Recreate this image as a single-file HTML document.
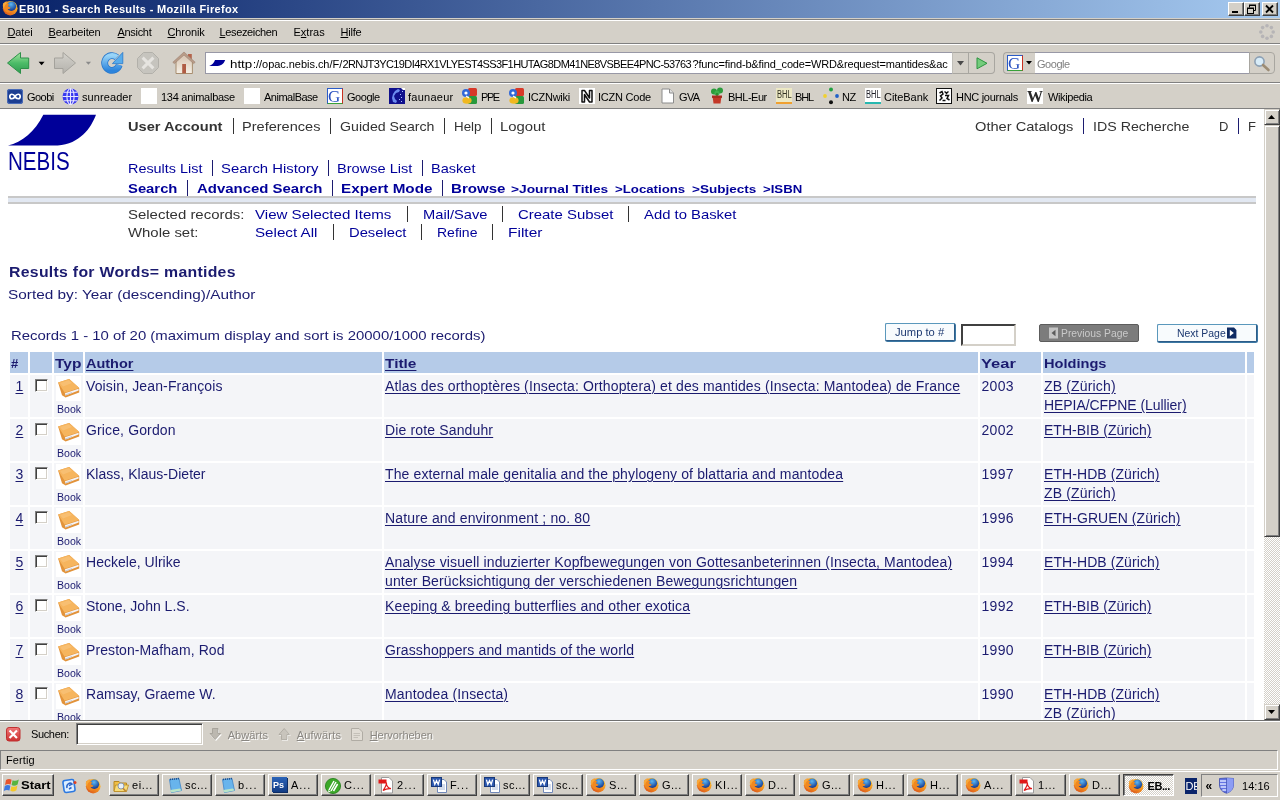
<!DOCTYPE html>
<html><head><meta charset="utf-8"><title>EBI01 - Search Results - Mozilla Firefox</title>
<style>
html,body{margin:0;padding:0;width:1280px;height:800px;overflow:hidden;background:#d4d0c8;font-family:"Liberation Sans",sans-serif;}
.t{position:absolute;white-space:pre;line-height:normal;}
.a{position:absolute;}
svg{position:absolute;overflow:visible;}
#root{position:absolute;left:0;top:0;width:1280px;height:800px;overflow:hidden;will-change:transform;}
</style></head><body><div id="root">
<div style="position:absolute;left:0px;top:0px;width:1280px;height:18px;background:linear-gradient(to right,#0a246a 0%,#0a246a 2%,#a6caf0 100%);"></div>
<div style="position:absolute;left:0px;top:18px;width:1280px;height:1px;background:#d4d0c8;"></div>
<div style="position:absolute;left:0px;top:19px;width:1280px;height:1px;background:#808080;"></div>
<div style="position:absolute;left:0px;top:20px;width:1280px;height:1px;background:#fff;"></div>
<span class="t" style="left:19.0px;top:3px;font-size:11px;color:#fff;font-weight:bold;letter-spacing:0.338px;">EBI01 - Search Results - Mozilla Firefox</span>
<div style="position:absolute;left:0px;top:21px;width:1280px;height:22px;background:#d4d0c8;"></div>
<span class="t" style="left:7.5px;top:26px;font-size:11px;color:#000;letter-spacing:-0.119px;"><u>D</u>atei</span>
<span class="t" style="left:48.5px;top:26px;font-size:11px;color:#000;letter-spacing:-0.112px;"><u>B</u>earbeiten</span>
<span class="t" style="left:117.5px;top:26px;font-size:11px;color:#000;letter-spacing:-0.311px;"><u>A</u>nsicht</span>
<span class="t" style="left:167.5px;top:26px;font-size:11px;color:#000;letter-spacing:-0.116px;"><u>C</u>hronik</span>
<span class="t" style="left:219.5px;top:26px;font-size:11px;color:#000;letter-spacing:-0.357px;"><u>L</u>esezeichen</span>
<span class="t" style="left:293.5px;top:26px;font-size:11px;color:#000;">E<u>x</u>tras</span>
<span class="t" style="left:340.5px;top:26px;font-size:11px;color:#000;letter-spacing:-0.201px;"><u>H</u>ilfe</span>
<div style="position:absolute;left:0px;top:43px;width:1280px;height:1px;background:#808080;"></div>
<div style="position:absolute;left:0px;top:44px;width:1280px;height:1px;background:#fff;"></div>
<div style="position:absolute;left:0px;top:82px;width:1280px;height:1px;background:#808080;"></div>
<div style="position:absolute;left:0px;top:83px;width:1280px;height:1px;background:#fff;"></div>
<div style="position:absolute;left:205px;top:52px;width:748px;height:22px;background:#fff;border:1px solid #9898a6;box-sizing:border-box;"></div>
<span class="t" style="left:230.0px;top:58px;font-size:11px;color:#000;transform:scaleX(1.2097);transform-origin:0 0;">http</span>
<span class="t" style="left:253.0px;top:58px;font-size:11px;color:#000;letter-spacing:-0.038px;">://opac.nebis.ch/F/</span>
<span class="t" style="left:342.5px;top:58px;font-size:11px;color:#000;letter-spacing:-0.602px;">2RNJT3YC19DI4RX1VLYEST4SS3F1HUTAG8DM41NE8VSBEE4PNC-53763</span>
<span class="t" style="left:692.5px;top:58px;font-size:11px;color:#000;letter-spacing:-0.165px;">?func=find-b&amp;find_code=WRD&amp;request=mantides&amp;ac</span>
<div style="position:absolute;left:1034px;top:52px;width:216px;height:22px;background:#fff;border-top:1px solid #9898a6;border-bottom:1px solid #9898a6;box-sizing:border-box;"></div>
<span class="t" style="left:1037.0px;top:58px;font-size:11px;color:#808080;letter-spacing:-0.455px;">Google</span>
<span class="t" style="left:27.0px;top:91px;font-size:11px;color:#000;letter-spacing:-0.537px;">Goobi</span>
<span class="t" style="left:82.0px;top:91px;font-size:11px;color:#000;letter-spacing:0.083px;">sunreader</span>
<span class="t" style="left:161.0px;top:91px;font-size:11px;color:#000;letter-spacing:-0.266px;">134 animalbase</span>
<span class="t" style="left:264.0px;top:91px;font-size:11px;color:#000;letter-spacing:-0.499px;">AnimalBase</span>
<span class="t" style="left:347.0px;top:91px;font-size:11px;color:#000;letter-spacing:-0.455px;">Google</span>
<span class="t" style="left:408.0px;top:91px;font-size:11px;color:#000;letter-spacing:0.253px;">faunaeur</span>
<span class="t" style="left:481.0px;top:91px;font-size:11px;color:#000;letter-spacing:-1.403px;">PPE</span>
<span class="t" style="left:528.0px;top:91px;font-size:11px;color:#000;letter-spacing:-0.256px;">ICZNwiki</span>
<span class="t" style="left:598.0px;top:91px;font-size:11px;color:#000;letter-spacing:-0.228px;">ICZN Code</span>
<span class="t" style="left:679.0px;top:91px;font-size:11px;color:#000;letter-spacing:-0.606px;">GVA</span>
<span class="t" style="left:728.0px;top:91px;font-size:11px;color:#000;letter-spacing:-0.496px;">BHL-Eur</span>
<span class="t" style="left:795.0px;top:91px;font-size:11px;color:#000;letter-spacing:-1.098px;">BHL</span>
<span class="t" style="left:842.0px;top:91px;font-size:11px;color:#000;letter-spacing:-0.462px;">NZ</span>
<span class="t" style="left:884.0px;top:91px;font-size:11px;color:#000;letter-spacing:-0.062px;">CiteBank</span>
<span class="t" style="left:956.0px;top:91px;font-size:11px;color:#000;letter-spacing:-0.292px;">HNC journals</span>
<span class="t" style="left:1048.0px;top:91px;font-size:11px;color:#000;letter-spacing:-0.372px;">Wikipedia</span>
<div style="position:absolute;left:0px;top:108px;width:1280px;height:1px;background:#808080;"></div>
<div style="position:absolute;left:0px;top:109px;width:1264px;height:611px;background:#fff;"></div>
<svg style="left:0;top:108px" width="110" height="70"><path d="M43.3 6.8 L96 6.8 C91 20 80 36 57.7 37.6 L8 37.6 C22 34 35 24 43.3 6.8 Z" fill="#000099"/></svg>
<span class="t" style="left:8.0px;top:147px;font-size:25px;color:#000099;transform:scaleX(0.8230);transform-origin:0 0;">NEBIS</span>
<span class="t" style="left:128.0px;top:119px;font-size:13px;color:#333333;font-weight:bold;transform:scaleX(1.1235);transform-origin:0 0;">User Account</span>
<div style="position:absolute;left:233px;top:118px;width:1px;height:16px;background:#333;"></div>
<span class="t" style="left:242.0px;top:119px;font-size:13px;color:#333333;transform:scaleX(1.1189);transform-origin:0 0;">Preferences</span>
<div style="position:absolute;left:330px;top:118px;width:1px;height:16px;background:#333;"></div>
<span class="t" style="left:340.0px;top:119px;font-size:13px;color:#333333;transform:scaleX(1.0887);transform-origin:0 0;">Guided Search</span>
<div style="position:absolute;left:444px;top:118px;width:1px;height:16px;background:#333;"></div>
<span class="t" style="left:454.0px;top:119px;font-size:13px;color:#333333;transform:scaleX(1.0254);transform-origin:0 0;">Help</span>
<div style="position:absolute;left:491px;top:118px;width:1px;height:16px;background:#333;"></div>
<span class="t" style="left:500.0px;top:119px;font-size:13px;color:#333333;transform:scaleX(1.1424);transform-origin:0 0;">Logout</span>
<span class="t" style="left:975.0px;top:119px;font-size:13px;color:#333333;transform:scaleX(1.1257);transform-origin:0 0;">Other Catalogs</span>
<div style="position:absolute;left:1083px;top:118px;width:1px;height:16px;background:#1c1c70;"></div>
<span class="t" style="left:1093.0px;top:119px;font-size:13px;color:#333333;transform:scaleX(1.0939);transform-origin:0 0;">IDS Recherche</span>
<span class="t" style="left:1219.0px;top:119px;font-size:13px;color:#333333;">D</span>
<div style="position:absolute;left:1238px;top:118px;width:1px;height:16px;background:#1c1c70;"></div>
<span class="t" style="left:1248.0px;top:119px;font-size:13px;color:#333333;">F</span>
<span class="t" style="left:128.0px;top:161px;font-size:13px;color:#000099;transform:scaleX(1.1075);transform-origin:0 0;">Results List</span>
<div style="position:absolute;left:212px;top:160px;width:1px;height:16px;background:#1c1c70;"></div>
<span class="t" style="left:221.0px;top:161px;font-size:13px;color:#000099;transform:scaleX(1.1429);transform-origin:0 0;">Search History</span>
<div style="position:absolute;left:328px;top:160px;width:1px;height:16px;background:#1c1c70;"></div>
<span class="t" style="left:337.0px;top:161px;font-size:13px;color:#000099;transform:scaleX(1.1224);transform-origin:0 0;">Browse List</span>
<div style="position:absolute;left:422px;top:160px;width:1px;height:16px;background:#1c1c70;"></div>
<span class="t" style="left:431.0px;top:161px;font-size:13px;color:#000099;transform:scaleX(1.1177);transform-origin:0 0;">Basket</span>
<span class="t" style="left:128.0px;top:181px;font-size:13px;color:#000099;font-weight:bold;transform:scaleX(1.1396);transform-origin:0 0;">Search</span>
<div style="position:absolute;left:187px;top:180px;width:1px;height:16px;background:#1c1c70;"></div>
<span class="t" style="left:197.0px;top:181px;font-size:13px;color:#000099;font-weight:bold;transform:scaleX(1.1496);transform-origin:0 0;">Advanced Search</span>
<div style="position:absolute;left:332px;top:180px;width:1px;height:16px;background:#1c1c70;"></div>
<span class="t" style="left:341.0px;top:181px;font-size:13px;color:#000099;font-weight:bold;transform:scaleX(1.1719);transform-origin:0 0;">Expert Mode</span>
<div style="position:absolute;left:442px;top:180px;width:1px;height:16px;background:#1c1c70;"></div>
<span class="t" style="left:451.0px;top:181px;font-size:13px;color:#000099;font-weight:bold;transform:scaleX(1.1589);transform-origin:0 0;">Browse</span>
<span class="t" style="left:511.0px;top:183px;font-size:11px;color:#000099;font-weight:bold;transform:scaleX(1.2503);transform-origin:0 0;">&gt;Journal Titles</span>
<span class="t" style="left:615.0px;top:183px;font-size:11px;color:#000099;font-weight:bold;transform:scaleX(1.2027);transform-origin:0 0;">&gt;Locations</span>
<span class="t" style="left:692.0px;top:183px;font-size:11px;color:#000099;font-weight:bold;transform:scaleX(1.2282);transform-origin:0 0;">&gt;Subjects</span>
<span class="t" style="left:763.0px;top:183px;font-size:11px;color:#000099;font-weight:bold;transform:scaleX(1.1984);transform-origin:0 0;">&gt;ISBN</span>
<div style="position:absolute;left:8px;top:196px;width:1248px;height:8px;background:#e2e8f2;border-top:2px solid #c8c8c8;border-bottom:2px solid #c8c8c8;box-sizing:border-box;"></div>
<span class="t" style="left:128.0px;top:207px;font-size:13px;color:#333333;transform:scaleX(1.1508);transform-origin:0 0;">Selected records:</span>
<span class="t" style="left:255.0px;top:207px;font-size:13px;color:#000099;transform:scaleX(1.1606);transform-origin:0 0;">View Selected Items</span>
<div style="position:absolute;left:407px;top:206px;width:1px;height:16px;background:#333;"></div>
<span class="t" style="left:423.0px;top:207px;font-size:13px;color:#000099;transform:scaleX(1.1288);transform-origin:0 0;">Mail/Save</span>
<div style="position:absolute;left:502px;top:206px;width:1px;height:16px;background:#333;"></div>
<span class="t" style="left:518.0px;top:207px;font-size:13px;color:#000099;transform:scaleX(1.1482);transform-origin:0 0;">Create Subset</span>
<div style="position:absolute;left:628px;top:206px;width:1px;height:16px;background:#333;"></div>
<span class="t" style="left:644.0px;top:207px;font-size:13px;color:#000099;transform:scaleX(1.1418);transform-origin:0 0;">Add to Basket</span>
<span class="t" style="left:128.0px;top:225px;font-size:13px;color:#333333;transform:scaleX(1.1467);transform-origin:0 0;">Whole set:</span>
<span class="t" style="left:255.0px;top:225px;font-size:13px;color:#000099;transform:scaleX(1.1673);transform-origin:0 0;">Select All</span>
<div style="position:absolute;left:333px;top:224px;width:1px;height:16px;background:#333;"></div>
<span class="t" style="left:349.0px;top:225px;font-size:13px;color:#000099;transform:scaleX(1.1355);transform-origin:0 0;">Deselect</span>
<div style="position:absolute;left:421px;top:224px;width:1px;height:16px;background:#333;"></div>
<span class="t" style="left:437.0px;top:225px;font-size:13px;color:#000099;transform:scaleX(1.0759);transform-origin:0 0;">Refine</span>
<div style="position:absolute;left:492px;top:224px;width:1px;height:16px;background:#333;"></div>
<span class="t" style="left:507.5px;top:225px;font-size:13px;color:#000099;transform:scaleX(1.1917);transform-origin:0 0;">Filter</span>
<span class="t" style="left:8.5px;top:263px;font-size:15px;color:#1b1b6f;font-weight:bold;letter-spacing:0.275px;transform:scaleX(1.0543);transform-origin:0 0;">Results for Words= mantides</span>
<span class="t" style="left:8.0px;top:287px;font-size:13px;color:#1b1b6f;transform:scaleX(1.1805);transform-origin:0 0;">Sorted by: Year (descending)/Author</span>
<span class="t" style="left:11.0px;top:328px;font-size:13px;color:#1b1b6f;transform:scaleX(1.1479);transform-origin:0 0;">Records 1 - 10 of 20 (maximum display and sort is 20000/1000 records)</span>
<div style="position:absolute;left:885px;top:323px;width:70px;height:18px;background:#f8fbfd;border:1px solid;border-color:#5a98bc #2c5c88 #2c5c88 #5a98bc;border-radius:2px;box-sizing:border-box;box-shadow:0.5px 0.5px 0 0.5px #3c78a4;"></div>
<span class="t" style="left:895.0px;top:326px;font-size:11px;color:#1c3870;transform:scaleX(1.0186);transform-origin:0 0;">Jump to #</span>
<div style="position:absolute;left:961px;top:324px;width:55px;height:22px;background:#fff;border:2px solid;border-color:#404040 #d4d0c8 #d4d0c8 #404040;box-sizing:border-box;"></div>
<div style="position:absolute;left:1039px;top:324px;width:100px;height:18px;background:#7c7c7c;border:1px solid #5c5c5c;border-radius:2px;box-sizing:border-box;"></div>
<svg style="left:1049px;top:327px" width="10" height="12"><path d="M0 0.5 H9 V11.5 H0 Z" fill="#c4c4c4"/><path d="M6.5 2.8 L2.5 6 L6.5 9.2 Z" fill="#5c5c5c"/></svg>
<span class="t" style="left:1061.0px;top:327px;font-size:11px;color:#cacaca;transform:scaleX(0.9394);transform-origin:0 0;">Previous Page</span>
<div style="position:absolute;left:1157px;top:324px;width:100px;height:18px;background:#f8fbfd;border:1px solid;border-color:#5a98bc #2c5c88 #2c5c88 #5a98bc;border-radius:2px;box-sizing:border-box;box-shadow:0.5px 0.5px 0 0.5px #3c78a4;"></div>
<span class="t" style="left:1176.5px;top:327px;font-size:11px;color:#1c3870;transform:scaleX(0.9481);transform-origin:0 0;">Next Page</span>
<svg style="left:1227px;top:327px" width="10" height="12"><path d="M0 0.5 H7 L9.4 3 V11.5 H0 Z" fill="#102c64"/><path d="M2.8 2.8 L6.8 6 L2.8 9.2 Z" fill="#fff"/></svg>
<div style="position:absolute;left:10px;top:352px;width:18px;height:21px;background:#b5cbe8;"></div>
<div style="position:absolute;left:30px;top:352px;width:22px;height:21px;background:#b5cbe8;"></div>
<div style="position:absolute;left:54px;top:352px;width:29px;height:21px;background:#b5cbe8;"></div>
<div style="position:absolute;left:85px;top:352px;width:297px;height:21px;background:#b5cbe8;"></div>
<div style="position:absolute;left:384px;top:352px;width:594px;height:21px;background:#b5cbe8;"></div>
<div style="position:absolute;left:980px;top:352px;width:61px;height:21px;background:#b5cbe8;"></div>
<div style="position:absolute;left:1043px;top:352px;width:202px;height:21px;background:#b5cbe8;"></div>
<div style="position:absolute;left:1247px;top:352px;width:7px;height:21px;background:#b5cbe8;"></div>
<span class="t" style="left:11.0px;top:356px;font-size:13px;color:#1b1b6f;font-weight:bold;">#</span>
<span class="t" style="left:55.0px;top:356px;font-size:13px;color:#1b1b6f;font-weight:bold;transform:scaleX(1.1929);transform-origin:0 0;">Typ</span>
<span class="t" style="left:86.0px;top:356px;font-size:13px;color:#1b1b6f;font-weight:bold;transform:scaleX(1.1131);transform-origin:0 0;text-decoration:underline;text-decoration-thickness:1px;text-underline-offset:2px;">Author</span>
<span class="t" style="left:385.0px;top:356px;font-size:13px;color:#1b1b6f;font-weight:bold;transform:scaleX(1.1860);transform-origin:0 0;text-decoration:underline;text-decoration-thickness:1px;text-underline-offset:2px;">Title</span>
<span class="t" style="left:981.0px;top:356px;font-size:13px;color:#1b1b6f;font-weight:bold;transform:scaleX(1.2709);transform-origin:0 0;">Year</span>
<span class="t" style="left:1044.0px;top:356px;font-size:13px;color:#1b1b6f;font-weight:bold;transform:scaleX(1.1227);transform-origin:0 0;">Holdings</span>
<div style="position:absolute;left:10px;top:375px;width:18px;height:42px;background:#f4f5f8;"></div>
<div style="position:absolute;left:30px;top:375px;width:22px;height:42px;background:#f4f5f8;"></div>
<div style="position:absolute;left:54px;top:375px;width:29px;height:42px;background:#f4f5f8;"></div>
<div style="position:absolute;left:85px;top:375px;width:297px;height:42px;background:#f4f5f8;"></div>
<div style="position:absolute;left:384px;top:375px;width:594px;height:42px;background:#f4f5f8;"></div>
<div style="position:absolute;left:980px;top:375px;width:61px;height:42px;background:#f4f5f8;"></div>
<div style="position:absolute;left:1043px;top:375px;width:202px;height:42px;background:#f4f5f8;"></div>
<div style="position:absolute;left:1247px;top:375px;width:7px;height:42px;background:#f4f5f8;"></div>
<span class="t" style="left:15.5px;top:378px;font-size:14px;color:#1b1b6f;text-decoration:underline;text-decoration-thickness:1px;text-underline-offset:2px;">1</span>
<div style="position:absolute;left:35px;top:379px;width:13px;height:13px;background:#fff;border:1px solid;border-color:#808080 #fff #fff #808080;box-sizing:border-box;box-shadow:inset 1px 1px 0 #404040, inset -1px -1px 0 #d4d0c8;"></div>
<div style="position:absolute;left:56px;top:376px;width:25px;height:25px;background:#fff;"></div>
<svg style="left:56px;top:376px" width="25" height="25"><path d="M2.1 6.6 L13.2 3.1 L23.2 12.1 L23.2 16.6 L9.6 21.6 L6 19.2 Z" fill="#e2933a"/><path d="M2.1 6.5 L13.2 3.1 L23.2 12.1 L8.7 16.8 Z" fill="#f6b55e"/><path d="M4 7 L12.8 4.2 L16 7 L7 10.5 Z" fill="#f9c37a" opacity="0.7"/><path d="M8.9 17.2 L22.6 12.8 L22.6 14.6 L9.5 19.4 Z" fill="#f4f4f8"/><path d="M9.2 18.4 L16 16 L16 17 L9.5 19.4 Z" fill="#c8ccd4"/></svg>
<span class="t" style="left:57.0px;top:404px;font-size:10px;color:#1b1b6f;transform:scaleX(1.0572);transform-origin:0 0;">Book</span>
<span class="t" style="left:86.0px;top:378px;font-size:14px;color:#1b1b6f;letter-spacing:0.135px;">Voisin, Jean-François</span>
<span class="t" style="left:385.0px;top:378px;font-size:14px;color:#1b1b6f;letter-spacing:0.132px;text-decoration:underline;text-decoration-thickness:1px;text-underline-offset:2px;">Atlas des orthoptères (Insecta: Orthoptera) et des mantides (Insecta: Mantodea) de France</span>
<span class="t" style="left:981.5px;top:378px;font-size:14px;color:#1b1b6f;letter-spacing:0.295px;">2003</span>
<span class="t" style="left:1044.0px;top:378px;font-size:14px;color:#1b1b6f;letter-spacing:0.154px;text-decoration:underline;text-decoration-thickness:1px;text-underline-offset:2px;">ZB (Zürich)</span>
<span class="t" style="left:1044.0px;top:397px;font-size:14px;color:#1b1b6f;letter-spacing:-0.069px;text-decoration:underline;text-decoration-thickness:1px;text-underline-offset:2px;">HEPIA/CFPNE (Lullier)</span>
<div style="position:absolute;left:10px;top:419px;width:18px;height:42px;background:#f4f5f8;"></div>
<div style="position:absolute;left:30px;top:419px;width:22px;height:42px;background:#f4f5f8;"></div>
<div style="position:absolute;left:54px;top:419px;width:29px;height:42px;background:#f4f5f8;"></div>
<div style="position:absolute;left:85px;top:419px;width:297px;height:42px;background:#f4f5f8;"></div>
<div style="position:absolute;left:384px;top:419px;width:594px;height:42px;background:#f4f5f8;"></div>
<div style="position:absolute;left:980px;top:419px;width:61px;height:42px;background:#f4f5f8;"></div>
<div style="position:absolute;left:1043px;top:419px;width:202px;height:42px;background:#f4f5f8;"></div>
<div style="position:absolute;left:1247px;top:419px;width:7px;height:42px;background:#f4f5f8;"></div>
<span class="t" style="left:15.5px;top:422px;font-size:14px;color:#1b1b6f;text-decoration:underline;text-decoration-thickness:1px;text-underline-offset:2px;">2</span>
<div style="position:absolute;left:35px;top:423px;width:13px;height:13px;background:#fff;border:1px solid;border-color:#808080 #fff #fff #808080;box-sizing:border-box;box-shadow:inset 1px 1px 0 #404040, inset -1px -1px 0 #d4d0c8;"></div>
<div style="position:absolute;left:56px;top:420px;width:25px;height:25px;background:#fff;"></div>
<svg style="left:56px;top:420px" width="25" height="25"><path d="M2.1 6.6 L13.2 3.1 L23.2 12.1 L23.2 16.6 L9.6 21.6 L6 19.2 Z" fill="#e2933a"/><path d="M2.1 6.5 L13.2 3.1 L23.2 12.1 L8.7 16.8 Z" fill="#f6b55e"/><path d="M4 7 L12.8 4.2 L16 7 L7 10.5 Z" fill="#f9c37a" opacity="0.7"/><path d="M8.9 17.2 L22.6 12.8 L22.6 14.6 L9.5 19.4 Z" fill="#f4f4f8"/><path d="M9.2 18.4 L16 16 L16 17 L9.5 19.4 Z" fill="#c8ccd4"/></svg>
<span class="t" style="left:57.0px;top:448px;font-size:10px;color:#1b1b6f;transform:scaleX(1.0572);transform-origin:0 0;">Book</span>
<span class="t" style="left:86.0px;top:422px;font-size:14px;color:#1b1b6f;letter-spacing:0.134px;">Grice, Gordon</span>
<span class="t" style="left:385.0px;top:422px;font-size:14px;color:#1b1b6f;letter-spacing:0.146px;text-decoration:underline;text-decoration-thickness:1px;text-underline-offset:2px;">Die rote Sanduhr</span>
<span class="t" style="left:981.5px;top:422px;font-size:14px;color:#1b1b6f;letter-spacing:0.295px;">2002</span>
<span class="t" style="left:1044.0px;top:422px;font-size:14px;color:#1b1b6f;letter-spacing:0.013px;text-decoration:underline;text-decoration-thickness:1px;text-underline-offset:2px;">ETH-BIB (Zürich)</span>
<div style="position:absolute;left:10px;top:463px;width:18px;height:42px;background:#f4f5f8;"></div>
<div style="position:absolute;left:30px;top:463px;width:22px;height:42px;background:#f4f5f8;"></div>
<div style="position:absolute;left:54px;top:463px;width:29px;height:42px;background:#f4f5f8;"></div>
<div style="position:absolute;left:85px;top:463px;width:297px;height:42px;background:#f4f5f8;"></div>
<div style="position:absolute;left:384px;top:463px;width:594px;height:42px;background:#f4f5f8;"></div>
<div style="position:absolute;left:980px;top:463px;width:61px;height:42px;background:#f4f5f8;"></div>
<div style="position:absolute;left:1043px;top:463px;width:202px;height:42px;background:#f4f5f8;"></div>
<div style="position:absolute;left:1247px;top:463px;width:7px;height:42px;background:#f4f5f8;"></div>
<span class="t" style="left:15.5px;top:466px;font-size:14px;color:#1b1b6f;text-decoration:underline;text-decoration-thickness:1px;text-underline-offset:2px;">3</span>
<div style="position:absolute;left:35px;top:467px;width:13px;height:13px;background:#fff;border:1px solid;border-color:#808080 #fff #fff #808080;box-sizing:border-box;box-shadow:inset 1px 1px 0 #404040, inset -1px -1px 0 #d4d0c8;"></div>
<div style="position:absolute;left:56px;top:464px;width:25px;height:25px;background:#fff;"></div>
<svg style="left:56px;top:464px" width="25" height="25"><path d="M2.1 6.6 L13.2 3.1 L23.2 12.1 L23.2 16.6 L9.6 21.6 L6 19.2 Z" fill="#e2933a"/><path d="M2.1 6.5 L13.2 3.1 L23.2 12.1 L8.7 16.8 Z" fill="#f6b55e"/><path d="M4 7 L12.8 4.2 L16 7 L7 10.5 Z" fill="#f9c37a" opacity="0.7"/><path d="M8.9 17.2 L22.6 12.8 L22.6 14.6 L9.5 19.4 Z" fill="#f4f4f8"/><path d="M9.2 18.4 L16 16 L16 17 L9.5 19.4 Z" fill="#c8ccd4"/></svg>
<span class="t" style="left:57.0px;top:492px;font-size:10px;color:#1b1b6f;transform:scaleX(1.0572);transform-origin:0 0;">Book</span>
<span class="t" style="left:86.0px;top:466px;font-size:14px;color:#1b1b6f;letter-spacing:0.027px;">Klass, Klaus-Dieter</span>
<span class="t" style="left:385.0px;top:466px;font-size:14px;color:#1b1b6f;letter-spacing:0.128px;text-decoration:underline;text-decoration-thickness:1px;text-underline-offset:2px;">The external male genitalia and the phylogeny of blattaria and mantodea</span>
<span class="t" style="left:981.5px;top:466px;font-size:14px;color:#1b1b6f;letter-spacing:0.295px;">1997</span>
<span class="t" style="left:1044.0px;top:466px;font-size:14px;color:#1b1b6f;letter-spacing:0.080px;text-decoration:underline;text-decoration-thickness:1px;text-underline-offset:2px;">ETH-HDB (Zürich)</span>
<span class="t" style="left:1044.0px;top:485px;font-size:14px;color:#1b1b6f;letter-spacing:0.154px;text-decoration:underline;text-decoration-thickness:1px;text-underline-offset:2px;">ZB (Zürich)</span>
<div style="position:absolute;left:10px;top:507px;width:18px;height:42px;background:#f4f5f8;"></div>
<div style="position:absolute;left:30px;top:507px;width:22px;height:42px;background:#f4f5f8;"></div>
<div style="position:absolute;left:54px;top:507px;width:29px;height:42px;background:#f4f5f8;"></div>
<div style="position:absolute;left:85px;top:507px;width:297px;height:42px;background:#f4f5f8;"></div>
<div style="position:absolute;left:384px;top:507px;width:594px;height:42px;background:#f4f5f8;"></div>
<div style="position:absolute;left:980px;top:507px;width:61px;height:42px;background:#f4f5f8;"></div>
<div style="position:absolute;left:1043px;top:507px;width:202px;height:42px;background:#f4f5f8;"></div>
<div style="position:absolute;left:1247px;top:507px;width:7px;height:42px;background:#f4f5f8;"></div>
<span class="t" style="left:15.5px;top:510px;font-size:14px;color:#1b1b6f;text-decoration:underline;text-decoration-thickness:1px;text-underline-offset:2px;">4</span>
<div style="position:absolute;left:35px;top:511px;width:13px;height:13px;background:#fff;border:1px solid;border-color:#808080 #fff #fff #808080;box-sizing:border-box;box-shadow:inset 1px 1px 0 #404040, inset -1px -1px 0 #d4d0c8;"></div>
<div style="position:absolute;left:56px;top:508px;width:25px;height:25px;background:#fff;"></div>
<svg style="left:56px;top:508px" width="25" height="25"><path d="M2.1 6.6 L13.2 3.1 L23.2 12.1 L23.2 16.6 L9.6 21.6 L6 19.2 Z" fill="#e2933a"/><path d="M2.1 6.5 L13.2 3.1 L23.2 12.1 L8.7 16.8 Z" fill="#f6b55e"/><path d="M4 7 L12.8 4.2 L16 7 L7 10.5 Z" fill="#f9c37a" opacity="0.7"/><path d="M8.9 17.2 L22.6 12.8 L22.6 14.6 L9.5 19.4 Z" fill="#f4f4f8"/><path d="M9.2 18.4 L16 16 L16 17 L9.5 19.4 Z" fill="#c8ccd4"/></svg>
<span class="t" style="left:57.0px;top:536px;font-size:10px;color:#1b1b6f;transform:scaleX(1.0572);transform-origin:0 0;">Book</span>
<span class="t" style="left:385.0px;top:510px;font-size:14px;color:#1b1b6f;letter-spacing:0.141px;text-decoration:underline;text-decoration-thickness:1px;text-underline-offset:2px;">Nature and environment ; no. 80</span>
<span class="t" style="left:981.5px;top:510px;font-size:14px;color:#1b1b6f;letter-spacing:0.295px;">1996</span>
<span class="t" style="left:1044.0px;top:510px;font-size:14px;color:#1b1b6f;letter-spacing:0.070px;text-decoration:underline;text-decoration-thickness:1px;text-underline-offset:2px;">ETH-GRUEN (Zürich)</span>
<div style="position:absolute;left:10px;top:551px;width:18px;height:42px;background:#f4f5f8;"></div>
<div style="position:absolute;left:30px;top:551px;width:22px;height:42px;background:#f4f5f8;"></div>
<div style="position:absolute;left:54px;top:551px;width:29px;height:42px;background:#f4f5f8;"></div>
<div style="position:absolute;left:85px;top:551px;width:297px;height:42px;background:#f4f5f8;"></div>
<div style="position:absolute;left:384px;top:551px;width:594px;height:42px;background:#f4f5f8;"></div>
<div style="position:absolute;left:980px;top:551px;width:61px;height:42px;background:#f4f5f8;"></div>
<div style="position:absolute;left:1043px;top:551px;width:202px;height:42px;background:#f4f5f8;"></div>
<div style="position:absolute;left:1247px;top:551px;width:7px;height:42px;background:#f4f5f8;"></div>
<span class="t" style="left:15.5px;top:554px;font-size:14px;color:#1b1b6f;text-decoration:underline;text-decoration-thickness:1px;text-underline-offset:2px;">5</span>
<div style="position:absolute;left:35px;top:555px;width:13px;height:13px;background:#fff;border:1px solid;border-color:#808080 #fff #fff #808080;box-sizing:border-box;box-shadow:inset 1px 1px 0 #404040, inset -1px -1px 0 #d4d0c8;"></div>
<div style="position:absolute;left:56px;top:552px;width:25px;height:25px;background:#fff;"></div>
<svg style="left:56px;top:552px" width="25" height="25"><path d="M2.1 6.6 L13.2 3.1 L23.2 12.1 L23.2 16.6 L9.6 21.6 L6 19.2 Z" fill="#e2933a"/><path d="M2.1 6.5 L13.2 3.1 L23.2 12.1 L8.7 16.8 Z" fill="#f6b55e"/><path d="M4 7 L12.8 4.2 L16 7 L7 10.5 Z" fill="#f9c37a" opacity="0.7"/><path d="M8.9 17.2 L22.6 12.8 L22.6 14.6 L9.5 19.4 Z" fill="#f4f4f8"/><path d="M9.2 18.4 L16 16 L16 17 L9.5 19.4 Z" fill="#c8ccd4"/></svg>
<span class="t" style="left:57.0px;top:580px;font-size:10px;color:#1b1b6f;transform:scaleX(1.0572);transform-origin:0 0;">Book</span>
<span class="t" style="left:86.0px;top:554px;font-size:14px;color:#1b1b6f;letter-spacing:0.029px;">Heckele, Ulrike</span>
<span class="t" style="left:385.0px;top:554px;font-size:14px;color:#1b1b6f;letter-spacing:0.126px;text-decoration:underline;text-decoration-thickness:1px;text-underline-offset:2px;">Analyse visuell induzierter Kopfbewegungen von Gottesanbeterinnen (Insecta, Mantodea)</span>
<span class="t" style="left:385.0px;top:573px;font-size:14px;color:#1b1b6f;letter-spacing:0.138px;text-decoration:underline;text-decoration-thickness:1px;text-underline-offset:2px;">unter Berücksichtigung der verschiedenen Bewegungsrichtungen</span>
<span class="t" style="left:981.5px;top:554px;font-size:14px;color:#1b1b6f;letter-spacing:0.295px;">1994</span>
<span class="t" style="left:1044.0px;top:554px;font-size:14px;color:#1b1b6f;letter-spacing:0.080px;text-decoration:underline;text-decoration-thickness:1px;text-underline-offset:2px;">ETH-HDB (Zürich)</span>
<div style="position:absolute;left:10px;top:595px;width:18px;height:42px;background:#f4f5f8;"></div>
<div style="position:absolute;left:30px;top:595px;width:22px;height:42px;background:#f4f5f8;"></div>
<div style="position:absolute;left:54px;top:595px;width:29px;height:42px;background:#f4f5f8;"></div>
<div style="position:absolute;left:85px;top:595px;width:297px;height:42px;background:#f4f5f8;"></div>
<div style="position:absolute;left:384px;top:595px;width:594px;height:42px;background:#f4f5f8;"></div>
<div style="position:absolute;left:980px;top:595px;width:61px;height:42px;background:#f4f5f8;"></div>
<div style="position:absolute;left:1043px;top:595px;width:202px;height:42px;background:#f4f5f8;"></div>
<div style="position:absolute;left:1247px;top:595px;width:7px;height:42px;background:#f4f5f8;"></div>
<span class="t" style="left:15.5px;top:598px;font-size:14px;color:#1b1b6f;text-decoration:underline;text-decoration-thickness:1px;text-underline-offset:2px;">6</span>
<div style="position:absolute;left:35px;top:599px;width:13px;height:13px;background:#fff;border:1px solid;border-color:#808080 #fff #fff #808080;box-sizing:border-box;box-shadow:inset 1px 1px 0 #404040, inset -1px -1px 0 #d4d0c8;"></div>
<div style="position:absolute;left:56px;top:596px;width:25px;height:25px;background:#fff;"></div>
<svg style="left:56px;top:596px" width="25" height="25"><path d="M2.1 6.6 L13.2 3.1 L23.2 12.1 L23.2 16.6 L9.6 21.6 L6 19.2 Z" fill="#e2933a"/><path d="M2.1 6.5 L13.2 3.1 L23.2 12.1 L8.7 16.8 Z" fill="#f6b55e"/><path d="M4 7 L12.8 4.2 L16 7 L7 10.5 Z" fill="#f9c37a" opacity="0.7"/><path d="M8.9 17.2 L22.6 12.8 L22.6 14.6 L9.5 19.4 Z" fill="#f4f4f8"/><path d="M9.2 18.4 L16 16 L16 17 L9.5 19.4 Z" fill="#c8ccd4"/></svg>
<span class="t" style="left:57.0px;top:624px;font-size:10px;color:#1b1b6f;transform:scaleX(1.0572);transform-origin:0 0;">Book</span>
<span class="t" style="left:86.0px;top:598px;font-size:14px;color:#1b1b6f;">Stone, John L.S.</span>
<span class="t" style="left:385.0px;top:598px;font-size:14px;color:#1b1b6f;letter-spacing:0.131px;text-decoration:underline;text-decoration-thickness:1px;text-underline-offset:2px;">Keeping &amp; breeding butterflies and other exotica</span>
<span class="t" style="left:981.5px;top:598px;font-size:14px;color:#1b1b6f;letter-spacing:0.295px;">1992</span>
<span class="t" style="left:1044.0px;top:598px;font-size:14px;color:#1b1b6f;letter-spacing:0.013px;text-decoration:underline;text-decoration-thickness:1px;text-underline-offset:2px;">ETH-BIB (Zürich)</span>
<div style="position:absolute;left:10px;top:639px;width:18px;height:42px;background:#f4f5f8;"></div>
<div style="position:absolute;left:30px;top:639px;width:22px;height:42px;background:#f4f5f8;"></div>
<div style="position:absolute;left:54px;top:639px;width:29px;height:42px;background:#f4f5f8;"></div>
<div style="position:absolute;left:85px;top:639px;width:297px;height:42px;background:#f4f5f8;"></div>
<div style="position:absolute;left:384px;top:639px;width:594px;height:42px;background:#f4f5f8;"></div>
<div style="position:absolute;left:980px;top:639px;width:61px;height:42px;background:#f4f5f8;"></div>
<div style="position:absolute;left:1043px;top:639px;width:202px;height:42px;background:#f4f5f8;"></div>
<div style="position:absolute;left:1247px;top:639px;width:7px;height:42px;background:#f4f5f8;"></div>
<span class="t" style="left:15.5px;top:642px;font-size:14px;color:#1b1b6f;text-decoration:underline;text-decoration-thickness:1px;text-underline-offset:2px;">7</span>
<div style="position:absolute;left:35px;top:643px;width:13px;height:13px;background:#fff;border:1px solid;border-color:#808080 #fff #fff #808080;box-sizing:border-box;box-shadow:inset 1px 1px 0 #404040, inset -1px -1px 0 #d4d0c8;"></div>
<div style="position:absolute;left:56px;top:640px;width:25px;height:25px;background:#fff;"></div>
<svg style="left:56px;top:640px" width="25" height="25"><path d="M2.1 6.6 L13.2 3.1 L23.2 12.1 L23.2 16.6 L9.6 21.6 L6 19.2 Z" fill="#e2933a"/><path d="M2.1 6.5 L13.2 3.1 L23.2 12.1 L8.7 16.8 Z" fill="#f6b55e"/><path d="M4 7 L12.8 4.2 L16 7 L7 10.5 Z" fill="#f9c37a" opacity="0.7"/><path d="M8.9 17.2 L22.6 12.8 L22.6 14.6 L9.5 19.4 Z" fill="#f4f4f8"/><path d="M9.2 18.4 L16 16 L16 17 L9.5 19.4 Z" fill="#c8ccd4"/></svg>
<span class="t" style="left:57.0px;top:668px;font-size:10px;color:#1b1b6f;transform:scaleX(1.0572);transform-origin:0 0;">Book</span>
<span class="t" style="left:86.0px;top:642px;font-size:14px;color:#1b1b6f;letter-spacing:0.088px;">Preston-Mafham, Rod</span>
<span class="t" style="left:385.0px;top:642px;font-size:14px;color:#1b1b6f;letter-spacing:0.130px;text-decoration:underline;text-decoration-thickness:1px;text-underline-offset:2px;">Grasshoppers and mantids of the world</span>
<span class="t" style="left:981.5px;top:642px;font-size:14px;color:#1b1b6f;letter-spacing:0.295px;">1990</span>
<span class="t" style="left:1044.0px;top:642px;font-size:14px;color:#1b1b6f;letter-spacing:0.013px;text-decoration:underline;text-decoration-thickness:1px;text-underline-offset:2px;">ETH-BIB (Zürich)</span>
<div style="position:absolute;left:10px;top:683px;width:18px;height:37px;background:#f4f5f8;"></div>
<div style="position:absolute;left:30px;top:683px;width:22px;height:37px;background:#f4f5f8;"></div>
<div style="position:absolute;left:54px;top:683px;width:29px;height:37px;background:#f4f5f8;"></div>
<div style="position:absolute;left:85px;top:683px;width:297px;height:37px;background:#f4f5f8;"></div>
<div style="position:absolute;left:384px;top:683px;width:594px;height:37px;background:#f4f5f8;"></div>
<div style="position:absolute;left:980px;top:683px;width:61px;height:37px;background:#f4f5f8;"></div>
<div style="position:absolute;left:1043px;top:683px;width:202px;height:37px;background:#f4f5f8;"></div>
<div style="position:absolute;left:1247px;top:683px;width:7px;height:37px;background:#f4f5f8;"></div>
<span class="t" style="left:15.5px;top:686px;font-size:14px;color:#1b1b6f;text-decoration:underline;text-decoration-thickness:1px;text-underline-offset:2px;">8</span>
<div style="position:absolute;left:35px;top:687px;width:13px;height:13px;background:#fff;border:1px solid;border-color:#808080 #fff #fff #808080;box-sizing:border-box;box-shadow:inset 1px 1px 0 #404040, inset -1px -1px 0 #d4d0c8;"></div>
<div style="position:absolute;left:56px;top:684px;width:25px;height:25px;background:#fff;"></div>
<svg style="left:56px;top:684px" width="25" height="25"><path d="M2.1 6.6 L13.2 3.1 L23.2 12.1 L23.2 16.6 L9.6 21.6 L6 19.2 Z" fill="#e2933a"/><path d="M2.1 6.5 L13.2 3.1 L23.2 12.1 L8.7 16.8 Z" fill="#f6b55e"/><path d="M4 7 L12.8 4.2 L16 7 L7 10.5 Z" fill="#f9c37a" opacity="0.7"/><path d="M8.9 17.2 L22.6 12.8 L22.6 14.6 L9.5 19.4 Z" fill="#f4f4f8"/><path d="M9.2 18.4 L16 16 L16 17 L9.5 19.4 Z" fill="#c8ccd4"/></svg>
<span class="t" style="left:57.0px;top:712px;font-size:10px;color:#1b1b6f;transform:scaleX(1.0572);transform-origin:0 0;">Book</span>
<span class="t" style="left:86.0px;top:686px;font-size:14px;color:#1b1b6f;letter-spacing:0.041px;">Ramsay, Graeme W.</span>
<span class="t" style="left:385.0px;top:686px;font-size:14px;color:#1b1b6f;letter-spacing:0.142px;text-decoration:underline;text-decoration-thickness:1px;text-underline-offset:2px;">Mantodea (Insecta)</span>
<span class="t" style="left:981.5px;top:686px;font-size:14px;color:#1b1b6f;letter-spacing:0.295px;">1990</span>
<span class="t" style="left:1044.0px;top:686px;font-size:14px;color:#1b1b6f;letter-spacing:0.080px;text-decoration:underline;text-decoration-thickness:1px;text-underline-offset:2px;">ETH-HDB (Zürich)</span>
<span class="t" style="left:1044.0px;top:705px;font-size:14px;color:#1b1b6f;letter-spacing:0.154px;text-decoration:underline;text-decoration-thickness:1px;text-underline-offset:2px;">ZB (Zürich)</span>
<div style="position:absolute;left:0px;top:720px;width:1280px;height:80px;background:#d4d0c8;"></div>
<div style="position:absolute;left:1264px;top:109px;width:16px;height:611px;background:#ebe9e4;background-image:repeating-conic-gradient(#fff 0% 25%, #d4d0c8 0% 50%);background-size:2px 2px;"></div>
<div style="position:absolute;left:1264px;top:109px;width:16px;height:16px;background:#d4d0c8;box-sizing:border-box;border:1px solid;border-color:#d4d0c8 #404040 #404040 #d4d0c8;box-shadow:inset 1px 1px 0 #fff, inset -1px -1px 0 #808080;"></div>
<svg style="left:1268px;top:115px" width="8" height="5"><path d="M0 4 L3.5 0 L7 4 Z" fill="#000"/></svg>
<div style="position:absolute;left:1264px;top:125px;width:16px;height:412px;background:#d4d0c8;box-sizing:border-box;border:1px solid;border-color:#d4d0c8 #404040 #404040 #d4d0c8;box-shadow:inset 1px 1px 0 #fff, inset -1px -1px 0 #808080;"></div>
<div style="position:absolute;left:1264px;top:704px;width:16px;height:16px;background:#d4d0c8;box-sizing:border-box;border:1px solid;border-color:#d4d0c8 #404040 #404040 #d4d0c8;box-shadow:inset 1px 1px 0 #fff, inset -1px -1px 0 #808080;"></div>
<svg style="left:1268px;top:710px" width="8" height="5"><path d="M0 0 L7 0 L3.5 4 Z" fill="#000"/></svg>
<div style="position:absolute;left:0px;top:720px;width:1280px;height:1px;background:#707070;"></div>
<div style="position:absolute;left:0px;top:721px;width:1280px;height:1px;background:#fff;"></div>
<div style="position:absolute;left:0px;top:722px;width:1280px;height:27px;background:#d4d0c8;"></div>
<span class="t" style="left:31.0px;top:728px;font-size:11px;color:#000;letter-spacing:-0.361px;">Suchen:</span>
<div style="position:absolute;left:76px;top:723px;width:127px;height:22px;background:#fff;box-sizing:border-box;border:1px solid;border-color:#808080 #fff #fff #808080;box-shadow:inset 1px 1px 0 #404040, inset -1px -1px 0 #d4d0c8;"></div>
<span class="t" style="left:227.7px;top:729px;font-size:11px;color:#8a8782;letter-spacing:0.077px;text-shadow:1px 1px 0 #fff;">Ab<u>w</u>ärts</span>
<span class="t" style="left:296.7px;top:729px;font-size:11px;color:#8a8782;letter-spacing:0.202px;text-shadow:1px 1px 0 #fff;"><u>A</u>ufwärts</span>
<span class="t" style="left:369.7px;top:729px;font-size:11px;color:#8a8782;letter-spacing:-0.038px;text-shadow:1px 1px 0 #fff;"><u>H</u>ervorheben</span>
<div style="position:absolute;left:0px;top:750px;width:1278px;height:20px;background:#d4d0c8;box-sizing:border-box;border:1px solid;border-color:#808080 #fff #fff #808080;"></div>
<span class="t" style="left:6.0px;top:754px;font-size:11px;color:#000;letter-spacing:0.117px;">Fertig</span>
<div style="position:absolute;left:0px;top:771px;width:1280px;height:1px;background:#fff;"></div>
<div style="position:absolute;left:0px;top:772px;width:1280px;height:28px;background:#d4d0c8;"></div>
<div style="position:absolute;left:2px;top:774px;width:52px;height:22px;background:#d4d0c8;box-sizing:border-box;border:1px solid;border-color:#fff #404040 #404040 #fff;box-shadow:inset -1px -1px 0 #808080;"></div>
<span class="t" style="left:21.0px;top:779px;font-size:11px;color:#000;font-weight:bold;transform:scaleX(1.1854);transform-origin:0 0;">Start</span>
<div style="position:absolute;left:109px;top:774px;width:50px;height:22px;background:#d4d0c8;box-sizing:border-box;border:1px solid;border-color:#fff #404040 #404040 #fff;box-shadow:inset -1px -1px 0 #808080;"></div>
<span class="t" style="left:132.0px;top:779px;font-size:11px;color:#000;letter-spacing:0.619px;">ei...</span>
<div style="position:absolute;left:162px;top:774px;width:50px;height:22px;background:#d4d0c8;box-sizing:border-box;border:1px solid;border-color:#fff #404040 #404040 #fff;box-shadow:inset -1px -1px 0 #808080;"></div>
<span class="t" style="left:185.0px;top:779px;font-size:11px;color:#000;letter-spacing:0.510px;">sc...</span>
<div style="position:absolute;left:215px;top:774px;width:50px;height:22px;background:#d4d0c8;box-sizing:border-box;border:1px solid;border-color:#fff #404040 #404040 #fff;box-shadow:inset -1px -1px 0 #808080;"></div>
<span class="t" style="left:238.0px;top:779px;font-size:11px;color:#000;letter-spacing:1.071px;">b...</span>
<div style="position:absolute;left:268px;top:774px;width:50px;height:22px;background:#d4d0c8;box-sizing:border-box;border:1px solid;border-color:#fff #404040 #404040 #fff;box-shadow:inset -1px -1px 0 #808080;"></div>
<span class="t" style="left:291.0px;top:779px;font-size:11px;color:#000;letter-spacing:0.898px;">A...</span>
<div style="position:absolute;left:321px;top:774px;width:50px;height:22px;background:#d4d0c8;box-sizing:border-box;border:1px solid;border-color:#fff #404040 #404040 #fff;box-shadow:inset -1px -1px 0 #808080;"></div>
<span class="t" style="left:344.0px;top:779px;font-size:11px;color:#000;letter-spacing:0.862px;">C...</span>
<div style="position:absolute;left:374px;top:774px;width:50px;height:22px;background:#d4d0c8;box-sizing:border-box;border:1px solid;border-color:#fff #404040 #404040 #fff;box-shadow:inset -1px -1px 0 #808080;"></div>
<span class="t" style="left:397.0px;top:779px;font-size:11px;color:#000;letter-spacing:1.138px;">2...</span>
<div style="position:absolute;left:427px;top:774px;width:50px;height:22px;background:#d4d0c8;box-sizing:border-box;border:1px solid;border-color:#fff #404040 #404040 #fff;box-shadow:inset -1px -1px 0 #808080;"></div>
<span class="t" style="left:450.0px;top:779px;font-size:11px;color:#000;letter-spacing:1.179px;">F...</span>
<div style="position:absolute;left:480px;top:774px;width:50px;height:22px;background:#d4d0c8;box-sizing:border-box;border:1px solid;border-color:#fff #404040 #404040 #fff;box-shadow:inset -1px -1px 0 #808080;"></div>
<span class="t" style="left:503.0px;top:779px;font-size:11px;color:#000;letter-spacing:0.510px;">sc...</span>
<div style="position:absolute;left:533px;top:774px;width:50px;height:22px;background:#d4d0c8;box-sizing:border-box;border:1px solid;border-color:#fff #404040 #404040 #fff;box-shadow:inset -1px -1px 0 #808080;"></div>
<span class="t" style="left:556.0px;top:779px;font-size:11px;color:#000;letter-spacing:0.510px;">sc...</span>
<div style="position:absolute;left:586px;top:774px;width:50px;height:22px;background:#d4d0c8;box-sizing:border-box;border:1px solid;border-color:#fff #404040 #404040 #fff;box-shadow:inset -1px -1px 0 #808080;"></div>
<span class="t" style="left:609.0px;top:779px;font-size:11px;color:#000;letter-spacing:0.565px;">S...</span>
<div style="position:absolute;left:639px;top:774px;width:50px;height:22px;background:#d4d0c8;box-sizing:border-box;border:1px solid;border-color:#fff #404040 #404040 #fff;box-shadow:inset -1px -1px 0 #808080;"></div>
<span class="t" style="left:662.0px;top:779px;font-size:11px;color:#000;letter-spacing:0.492px;">G...</span>
<div style="position:absolute;left:692px;top:774px;width:50px;height:22px;background:#d4d0c8;box-sizing:border-box;border:1px solid;border-color:#fff #404040 #404040 #fff;box-shadow:inset -1px -1px 0 #808080;"></div>
<span class="t" style="left:715.0px;top:779px;font-size:11px;color:#000;letter-spacing:0.737px;">KI...</span>
<div style="position:absolute;left:745px;top:774px;width:50px;height:22px;background:#d4d0c8;box-sizing:border-box;border:1px solid;border-color:#fff #404040 #404040 #fff;box-shadow:inset -1px -1px 0 #808080;"></div>
<span class="t" style="left:768.0px;top:779px;font-size:11px;color:#000;letter-spacing:0.695px;">D...</span>
<div style="position:absolute;left:799px;top:774px;width:51px;height:22px;background:#d4d0c8;box-sizing:border-box;border:1px solid;border-color:#fff #404040 #404040 #fff;box-shadow:inset -1px -1px 0 #808080;"></div>
<span class="t" style="left:822.0px;top:779px;font-size:11px;color:#000;letter-spacing:0.492px;">G...</span>
<div style="position:absolute;left:853px;top:774px;width:51px;height:22px;background:#d4d0c8;box-sizing:border-box;border:1px solid;border-color:#fff #404040 #404040 #fff;box-shadow:inset -1px -1px 0 #808080;"></div>
<span class="t" style="left:876.0px;top:779px;font-size:11px;color:#000;letter-spacing:0.795px;">H...</span>
<div style="position:absolute;left:907px;top:774px;width:51px;height:22px;background:#d4d0c8;box-sizing:border-box;border:1px solid;border-color:#fff #404040 #404040 #fff;box-shadow:inset -1px -1px 0 #808080;"></div>
<span class="t" style="left:930.0px;top:779px;font-size:11px;color:#000;letter-spacing:0.795px;">H...</span>
<div style="position:absolute;left:961px;top:774px;width:51px;height:22px;background:#d4d0c8;box-sizing:border-box;border:1px solid;border-color:#fff #404040 #404040 #fff;box-shadow:inset -1px -1px 0 #808080;"></div>
<span class="t" style="left:984.0px;top:779px;font-size:11px;color:#000;letter-spacing:0.898px;">A...</span>
<div style="position:absolute;left:1015px;top:774px;width:51px;height:22px;background:#d4d0c8;box-sizing:border-box;border:1px solid;border-color:#fff #404040 #404040 #fff;box-shadow:inset -1px -1px 0 #808080;"></div>
<span class="t" style="left:1038.0px;top:779px;font-size:11px;color:#000;letter-spacing:0.638px;">1...</span>
<div style="position:absolute;left:1069px;top:774px;width:51px;height:22px;background:#d4d0c8;box-sizing:border-box;border:1px solid;border-color:#fff #404040 #404040 #fff;box-shadow:inset -1px -1px 0 #808080;"></div>
<span class="t" style="left:1092.0px;top:779px;font-size:11px;color:#000;letter-spacing:0.695px;">D...</span>
<div style="position:absolute;left:1123px;top:774px;width:51px;height:22px;box-sizing:border-box;border:1px solid;border-color:#404040 #fff #fff #404040;box-shadow:inset 1px 1px 0 #808080;background:#fff;background-image:repeating-conic-gradient(#fff 0% 25%, #d4d0c8 0% 50%);background-size:2px 2px;"></div>
<span class="t" style="left:1147.5px;top:780px;font-size:11px;color:#000;font-weight:bold;letter-spacing:-0.436px;">EB...</span>
<div class="a" style="left:1185px;top:778px;width:12px;height:16px;background:#0a246a;overflow:hidden;"><span class="t" style="left:0.5px;top:2px;font-size:11px;color:#fff;letter-spacing:-0.3px;">DE</span></div>
<div style="position:absolute;left:1201px;top:774px;width:77px;height:23px;box-sizing:border-box;border:1px solid;border-color:#808080 #fff #fff #808080;"></div>
<span class="t" style="left:1205.5px;top:779px;font-size:12px;color:#000;font-weight:bold;">«</span>
<span class="t" style="left:1242.0px;top:780px;font-size:11px;color:#000;letter-spacing:0.045px;">14:16</span>
<svg style="left:0;top:44px" width="210" height="40" viewBox="0 44 210 40">
<defs>
<linearGradient id="gg" x1="0" y1="0" x2="0" y2="1"><stop offset="0" stop-color="#a6e6a0"/><stop offset="0.5" stop-color="#4cbc68"/><stop offset="1" stop-color="#2f9a50"/></linearGradient>
<linearGradient id="gy" x1="0" y1="0" x2="0" y2="1"><stop offset="0" stop-color="#d4d2cc"/><stop offset="1" stop-color="#b4b2ac"/></linearGradient>
<linearGradient id="gb" x1="0" y1="0" x2="0" y2="1"><stop offset="0" stop-color="#98d4f8"/><stop offset="1" stop-color="#2c84dc"/></linearGradient>
<linearGradient id="gw" x1="0" y1="0" x2="0" y2="1"><stop offset="0" stop-color="#d4c0ac"/><stop offset="1" stop-color="#f6f0e6"/></linearGradient>
<linearGradient id="gh" x1="0" y1="0" x2="0" y2="1"><stop offset="0" stop-color="#b89c84"/><stop offset="1" stop-color="#e0d0b8"/></linearGradient>
</defs>
<path d="M7.5 63 L20.5 52.5 L20.5 58 L28.7 58 L28.7 68.5 L20.5 68.5 L20.5 73.5 Z" fill="url(#gg)" stroke="#2c9048" stroke-width="1" stroke-linejoin="round"/>
<path d="M38.6 61.8 L44.6 61.8 L41.6 65.2 Z" fill="#000"/>
<path d="M75.5 63 L63 52.5 L63 58 L54.5 58 L54.5 68.5 L63 68.5 L63 73.5 Z" fill="url(#gy)" stroke="#a4a29c" stroke-width="1" stroke-linejoin="round"/>
<path d="M85.8 61.8 L91 61.8 L88.4 64.8 Z" fill="#8a8a8a"/>
<path d="M116.8 57.3 A7.4 7.4 0 1 0 119.2 65" fill="none" stroke="#2878cc" stroke-width="6.8"/>
<path d="M116.8 57.3 A7.4 7.4 0 1 0 119.2 65" fill="none" stroke="url(#gb)" stroke-width="5.2"/>
<path d="M122.8 52.4 L122.8 63.6 L112.4 63.6 Z" fill="#58acec" stroke="#2878cc" stroke-width="0.8" stroke-linejoin="round"/>
<path d="M143.5 52.5 L152.5 52.5 L158.5 58.5 L158.5 67.5 L152.5 73.5 L143.5 73.5 L137.5 67.5 L137.5 58.5 Z" fill="#c6c4be" stroke="#b2b0aa" stroke-width="1"/>
<path d="M142.6 57.6 L153.4 68.4 M153.4 57.6 L142.6 68.4" stroke="#e6e4e0" stroke-width="3" stroke-linecap="butt"/>
<rect x="188" y="54" width="3.8" height="6" fill="#b4644c"/>
<path d="M176 61 L184 53.5 L192.4 61 L192.4 73.5 L176 73.5 Z" fill="url(#gw)" stroke="#a08464" stroke-width="0.9"/>
<path d="M184 52 L172.8 62.3 L174.4 63.6 L184 55 L193.6 63.6 L195.2 62.3 Z" fill="#b89c88" stroke="#9c8070" stroke-width="0.6"/>
<rect x="182.2" y="64" width="3.8" height="9.3" fill="#b05c44"/>
</svg>
<svg style="left:208px;top:56px" width="18" height="14"><path d="M7 4 L17.2 4 C16 7 14 9.7 9.6 10 L1.2 10 C4 9.2 6 6.8 7 4 Z" fill="#000099"/></svg>
<div style="position:absolute;left:952px;top:52px;width:17px;height:22px;box-sizing:border-box;border:1px solid #a8a6a0;border-left:1px solid #c0beb8;background:#d4d0c8;"></div>
<svg style="left:957px;top:61px" width="8" height="5"><path d="M0 0 L7 0 L3.5 4.5 Z" fill="#4a4a4a"/></svg>
<div style="position:absolute;left:969px;top:52px;width:26px;height:22px;box-sizing:border-box;border:1px solid #a8a6a0;border-left:0;border-radius:0 4px 4px 0;background:#d4d0c8;"></div>
<svg style="left:976px;top:57px" width="12" height="13"><path d="M1 0.8 L11 6.3 L1 11.8 Z" fill="#74cc7c" stroke="#2c9440" stroke-width="1" stroke-linejoin="round"/></svg>
<div style="position:absolute;left:1003px;top:52px;width:32px;height:22px;box-sizing:border-box;border:1px solid #a8a6a0;border-right:0;border-radius:4px 0 0 4px;background:#d4d0c8;"></div>
<div style="position:absolute;left:1007px;top:55px;width:16px;height:16px;background:#fff;box-sizing:border-box;border:1px solid;border-color:#2c5cc8 #c83020 #38a038 #2c5cc8;"></div>
<span class="t" style="left:1008.0px;top:54px;font-size:17px;color:#2850c0;font-family:'Liberation Serif',serif;">G</span>
<svg style="left:1026px;top:61px" width="7" height="4"><path d="M0 0 L6 0 L3 3.5 Z" fill="#000"/></svg>
<div style="position:absolute;left:1249px;top:52px;width:26px;height:22px;box-sizing:border-box;border:1px solid #a8a6a0;border-radius:0 4px 4px 0;background:#d4d0c8;"></div>
<svg style="left:1253px;top:55px" width="18" height="17"><circle cx="6.5" cy="6.5" r="4.6" fill="#d8ecf8" stroke="#8ca0b4" stroke-width="1.6"/><path d="M10 10 L15.5 15" stroke="#9c8c74" stroke-width="2.6" stroke-linecap="round"/></svg>
<svg style="left:1258px;top:23px" width="18" height="18" viewBox="0 0 18 18"><circle cx="15.20" cy="9.00" r="1.8" fill="#b6b4b6"/><circle cx="13.38" cy="13.38" r="1.8" fill="#b6b4b6"/><circle cx="9.00" cy="15.20" r="1.8" fill="#b6b4b6"/><circle cx="4.62" cy="13.38" r="1.8" fill="#b6b4b6"/><circle cx="2.80" cy="9.00" r="1.8" fill="#b6b4b6"/><circle cx="4.62" cy="4.62" r="1.8" fill="#b6b4b6"/><circle cx="9.00" cy="2.80" r="1.8" fill="#b6b4b6"/><circle cx="13.38" cy="4.62" r="1.8" fill="#b6b4b6"/></svg>
<div style="position:absolute;left:7px;top:89px;width:16px;height:15px;background:#1c3e92;border-radius:3px;box-shadow:inset 0 0 0 1px #4a6cb8;"></div>
<svg style="left:7px;top:89px" width="16" height="15"><path d="M8 7.5 C6.5 4.5 2.8 4.5 2.8 7.5 C2.8 10.5 6.5 10.5 8 7.5 C9.5 4.5 13.2 4.5 13.2 7.5 C13.2 10.5 9.5 10.5 8 7.5 Z" fill="none" stroke="#fff" stroke-width="1.7"/></svg>
<svg style="left:62px;top:88px" width="17" height="17"><circle cx="8.5" cy="8.5" r="8" fill="#3838f0"/><g stroke="#e8e8ff" stroke-width="1.1" fill="none"><ellipse cx="8.5" cy="8.5" rx="3.6" ry="8"/><path d="M8.5 0.5 V16.5 M0.5 8.5 H16.5 M1.8 4.3 H15.2 M1.8 12.7 H15.2"/></g></svg>
<div style="position:absolute;left:141px;top:88px;width:16px;height:16px;background:#fff;"></div>
<div style="position:absolute;left:244px;top:88px;width:16px;height:16px;background:#fff;"></div>
<div style="position:absolute;left:327px;top:88px;width:16px;height:16px;background:#fff;box-sizing:border-box;border:1px solid;border-color:#2c5cc8 #c83020 #38a038 #2c5cc8;"></div>
<span class="t" style="left:328.0px;top:87px;font-size:17px;color:#2850c0;font-family:'Liberation Serif',serif;">G</span>
<div style="position:absolute;left:389px;top:88px;width:16px;height:16px;background:#10108c;"></div>
<svg style="left:389px;top:88px" width="16" height="16"><path d="M9 1 L11 2 L10 4 L7 5 L5 8 L6 11 L8 13 L7 15 L4 14 L3 10 L4 6 L6 3 Z" fill="#6c8cf0"/><path d="M11 6 h1 v1 h-1z M12 9 h1 v1 h-1z M10 11 h1 v1 h-1z M13 3 h1 v1 h-1z M12 13 h1 v1 h-1z" fill="#a8c0ff"/><path d="M12 0 L16 0 L16 2 L14 2 L13 1 Z" fill="#fff"/></svg>
<svg style="left:461px;top:88px" width="17" height="17"><rect x="7" y="0" width="9" height="8" rx="1.5" fill="#d83828"/><rect x="7" y="8" width="9" height="8" rx="1.5" fill="#28983c"/><circle cx="5" cy="5" r="4" fill="#3068d8"/><ellipse cx="6" cy="12.5" rx="4.6" ry="3.2" fill="#f0b820"/><circle cx="5" cy="5" r="1.6" fill="#fff"/><path d="M5 8 L8 10" stroke="#fff" stroke-width="1.2"/></svg>
<svg style="left:508px;top:88px" width="17" height="17"><rect x="7" y="0" width="9" height="8" rx="1.5" fill="#d83828"/><rect x="7" y="8" width="9" height="8" rx="1.5" fill="#28983c"/><circle cx="5" cy="5" r="4" fill="#3068d8"/><ellipse cx="6" cy="12.5" rx="4.6" ry="3.2" fill="#f0b820"/><circle cx="5" cy="5" r="1.6" fill="#fff"/><path d="M5 8 L8 10" stroke="#fff" stroke-width="1.2"/></svg>
<div style="position:absolute;left:579px;top:88px;width:16px;height:16px;background:#fff;"></div>
<svg style="left:579px;top:88px" width="16" height="16"><path d="M3 14 V2.5 H5.5 L10.5 10 V2.5 H13 V14 H10.5 L5.5 6.5 V14 Z" fill="#fff" stroke="#101010" stroke-width="1.5" stroke-linejoin="round"/></svg>
<svg style="left:661px;top:88px" width="14" height="16"><path d="M1 1 H8.5 L12.5 5 V15 H1 Z" fill="#fff" stroke="#8c8c8c" stroke-width="1"/><path d="M8.5 1 V5 H12.5" fill="#e0e0e0" stroke="#8c8c8c" stroke-width="1"/></svg>
<svg style="left:709px;top:87px" width="17" height="18"><circle cx="5" cy="4.5" r="3" fill="#2c9c3c"/><circle cx="11" cy="3.5" r="3" fill="#2c9c3c"/><circle cx="8" cy="6" r="2.6" fill="#3cb04c"/><path d="M8 6 V10" stroke="#2c7c2c" stroke-width="1.4"/><path d="M3.5 9 H12.5 L11.5 16.5 H4.5 Z" fill="#c43828"/><rect x="3" y="8.5" width="10" height="2.4" fill="#a82c20"/></svg>
<div style="position:absolute;left:776px;top:88px;width:16px;height:16px;background:#ece8c4;"></div>
<div style="position:absolute;left:776px;top:102px;width:16px;height:2px;background:#f0a030;"></div>
<span class="t" style="left:776.5px;top:89px;font-size:10px;color:#303020;transform:scaleX(0.7505);transform-origin:0 0;">BHL</span>
<svg style="left:822px;top:86px" width="18" height="20"><circle cx="9" cy="3.5" r="2" fill="#20a040"/><circle cx="3" cy="10" r="1.9" fill="#f0d030"/><circle cx="15" cy="10" r="1.9" fill="#2060c8"/><circle cx="9" cy="16.3" r="2" fill="#101010"/></svg>
<div style="position:absolute;left:865px;top:88px;width:16px;height:16px;background:#fff;"></div>
<div style="position:absolute;left:865px;top:102px;width:16px;height:2px;background:#28b8b0;"></div>
<span class="t" style="left:865.5px;top:89px;font-size:10px;color:#202028;transform:scaleX(0.7505);transform-origin:0 0;">BHL</span>
<div style="position:absolute;left:936px;top:88px;width:16px;height:16px;background:#fff;box-sizing:border-box;border:1.5px solid #101010;"></div>
<svg style="left:936px;top:88px" width="16" height="16"><path d="M3.5 5 l2.5 -1.5 l1 2.5 l-2.5 2 l1.5 2 l-2.5 2.5 M8.5 3.5 l2 1.5 l2 -1.5 M9 7.5 l3.5 0 l-1.5 3 l2.5 1.5 M6.5 12.5 l3 0 M10 6 l1 -1" stroke="#101010" stroke-width="1.5" fill="none"/></svg>
<div style="position:absolute;left:1027px;top:88px;width:16px;height:16px;background:#fff;"></div>
<span class="t" style="left:1027.0px;top:88px;font-size:16px;color:#282828;font-weight:bold;font-family:'Liberation Serif',serif;">W</span>
<svg style="left:2px;top:0px" width="16" height="16" viewBox="0 0 16 16"><defs><radialGradient id="fb2_0" cx="0.45" cy="0.3" r="0.7"><stop offset="0" stop-color="#5cb8f4"/><stop offset="1" stop-color="#123890"/></radialGradient><linearGradient id="fo2_0" x1="1" y1="0" x2="0.1" y2="1"><stop offset="0" stop-color="#fcd83c"/><stop offset="0.45" stop-color="#f49420"/><stop offset="1" stop-color="#d8501c"/></linearGradient></defs><circle cx="8.2" cy="8.2" r="7.3" fill="url(#fo2_0)"/><circle cx="9.4" cy="6.2" r="4.7" fill="url(#fb2_0)"/><path d="M1.2 3.6 L4.4 1.2 L4.8 3.8 L7.2 4.2 L5.8 6.2 L8.6 7.8 C7.8 9.2 6.2 9.4 5 8.8 C5.8 10.8 8.2 11.6 10.4 10.8 C8.8 13.2 4.6 13.2 2.6 10.8 C1 8.8 0.4 5.8 1.2 3.6 Z" fill="#f08820"/><path d="M1.2 3.6 L4.4 1.2 L4.8 3.8 C3 4.6 2 6.6 2.2 9 C1 7.4 0.6 5.4 1.2 3.6 Z" fill="#f8a838"/></svg>
<div style="position:absolute;left:1228px;top:2px;width:16px;height:14px;background:#d4d0c8;box-sizing:border-box;border:1px solid;border-color:#fff #404040 #404040 #fff;box-shadow:inset -1px -1px 0 #808080;"></div>
<div style="position:absolute;left:1244px;top:2px;width:16px;height:14px;background:#d4d0c8;box-sizing:border-box;border:1px solid;border-color:#fff #404040 #404040 #fff;box-shadow:inset -1px -1px 0 #808080;"></div>
<div style="position:absolute;left:1262px;top:2px;width:16px;height:14px;background:#d4d0c8;box-sizing:border-box;border:1px solid;border-color:#fff #404040 #404040 #fff;box-shadow:inset -1px -1px 0 #808080;"></div>
<div style="position:absolute;left:1232px;top:11px;width:6px;height:2px;background:#000;"></div>
<svg style="left:1244px;top:2px" width="16" height="14"><path d="M5.5 3.5 H11.5 V8.5 H9 M5.5 3.5 V5.5" fill="none" stroke="#000" stroke-width="1"/><rect x="5" y="2.5" width="7" height="1.5" fill="#000"/><rect x="3.5" y="6.5" width="6" height="5" fill="none" stroke="#000" stroke-width="1"/><rect x="3" y="5.5" width="7" height="1.5" fill="#000"/></svg>
<svg style="left:1262px;top:2px" width="16" height="14"><path d="M4 3.5 L11 10.5 M11 3.5 L4 10.5" stroke="#000" stroke-width="1.8"/></svg>
<svg style="left:6px;top:727px" width="15" height="15"><defs><linearGradient id="rc" x1="0" y1="0" x2="0" y2="1"><stop offset="0" stop-color="#f07878"/><stop offset="1" stop-color="#cc3030"/></linearGradient></defs><rect x="0.5" y="0.5" width="13.5" height="13.5" rx="2.6" fill="url(#rc)" stroke="#c03030" stroke-width="1"/><path d="M4.3 4.3 L10.2 10.2 M10.2 4.3 L4.3 10.2" stroke="#fff" stroke-width="2.2" stroke-linecap="square"/></svg>
<svg style="left:208px;top:727px" width="15" height="16"><path d="M5 2.5 H11 V7.5 H14 L8 14 L2 7.5 H5 Z" fill="#fff"/><path d="M4.5 1.5 H10 V6.5 H12.5 L7.2 12.5 L2 6.5 H4.5 Z" fill="#bcb8b0" stroke="#a09c94" stroke-width="0.8"/></svg>
<svg style="left:277px;top:727px" width="15" height="16"><path d="M5 13.5 H11 V8.5 H14 L8 2.5 L2 8.5 H5 Z" fill="#fff"/><path d="M4.5 12.5 H10 V7.5 H12.5 L7.2 1.5 L2 7.5 H4.5 Z" fill="#c8c4bc" stroke="#a8a49c" stroke-width="0.8"/></svg>
<svg style="left:350px;top:727px" width="14" height="15"><path d="M1.5 1.5 H9 L12.5 5 V13.5 H1.5 Z" fill="#e0dcd4" stroke="#b0aca4" stroke-width="1"/><path d="M3.5 6.5 H10 M3.5 8.5 H10 M3.5 10.5 H8" stroke="#c4c0b8" stroke-width="1"/></svg>
<svg style="left:4px;top:777px" width="17" height="16"><path d="M2 3 C4 1.6 6 1.6 7.6 2.8 L6.6 7.6 C5 6.6 3 6.6 1 8 Z" fill="#e8542c"/><path d="M8.6 3.2 C10.4 4.2 12.6 4 14.8 2.6 L13.6 7.4 C11.6 8.8 9.4 9 7.6 8 Z" fill="#58b440"/><path d="M0.8 9 C2.8 7.6 4.8 7.6 6.4 8.8 L5.4 13.6 C3.8 12.6 1.8 12.6 -0.2 14 Z" fill="#3c78e0"/><path d="M7.4 9.2 C9.2 10.2 11.4 10 13.4 8.6 L12.4 13.2 C10.4 14.6 8.2 14.8 6.4 13.8 Z" fill="#f4c828"/></svg>
<svg style="left:62px;top:777px" width="16" height="17"><rect x="1.5" y="3" width="11" height="12" rx="2" fill="#dceeff" stroke="#2c78e0" stroke-width="1.6" transform="rotate(-8 7 9)"/><path d="M5 11 C4 7 8 5 10 7 L7 8.6 M9.5 10.5 L7 12" stroke="#2c64c8" stroke-width="1.5" fill="none"/><circle cx="13" cy="5.6" r="1.5" fill="#e04020"/></svg>
<svg style="left:85px;top:777.5px" width="16" height="16" viewBox="0 0 16 16"><defs><radialGradient id="fb85_777.5" cx="0.45" cy="0.3" r="0.7"><stop offset="0" stop-color="#5cb8f4"/><stop offset="1" stop-color="#123890"/></radialGradient><linearGradient id="fo85_777.5" x1="1" y1="0" x2="0.1" y2="1"><stop offset="0" stop-color="#fcd83c"/><stop offset="0.45" stop-color="#f49420"/><stop offset="1" stop-color="#d8501c"/></linearGradient></defs><circle cx="8.2" cy="8.2" r="7.3" fill="url(#fo85_777.5)"/><circle cx="9.4" cy="6.2" r="4.7" fill="url(#fb85_777.5)"/><path d="M1.2 3.6 L4.4 1.2 L4.8 3.8 L7.2 4.2 L5.8 6.2 L8.6 7.8 C7.8 9.2 6.2 9.4 5 8.8 C5.8 10.8 8.2 11.6 10.4 10.8 C8.8 13.2 4.6 13.2 2.6 10.8 C1 8.8 0.4 5.8 1.2 3.6 Z" fill="#f08820"/><path d="M1.2 3.6 L4.4 1.2 L4.8 3.8 C3 4.6 2 6.6 2.2 9 C1 7.4 0.6 5.4 1.2 3.6 Z" fill="#f8a838"/></svg>
<svg style="left:113px;top:778px" width="17" height="16"><path d="M1 3.5 H6 L7.5 5 H13.5 V13 H1 Z" fill="#f0c048" stroke="#b88820" stroke-width="1"/><path d="M2.5 7 H15.5 L13.5 13.5 H1 Z" fill="#f8dc78" stroke="#b88820" stroke-width="0.8"/><circle cx="8" cy="8" r="3" fill="#e8f0f8" stroke="#8898b0" stroke-width="1"/><path d="M10 10.4 L13 13.4" stroke="#c08838" stroke-width="1.6"/></svg>
<svg style="left:167px;top:777px" width="16" height="17"><path d="M2.5 2.5 L12 1.5 L14.5 13.5 L4.5 15.5 Z" fill="#68b4ec" stroke="#3c84c8" stroke-width="0.8"/><path d="M3 13 L13 11.5 L14.5 13.5 L4.5 15.5 Z" fill="#b8e4c8"/><path d="M3 2.5 L12 1.5" stroke="#1c4c8c" stroke-width="1.6" stroke-dasharray="1 1"/></svg>
<svg style="left:220px;top:777px" width="16" height="17"><path d="M2.5 2.5 L12 1.5 L14.5 13.5 L4.5 15.5 Z" fill="#68b4ec" stroke="#3c84c8" stroke-width="0.8"/><path d="M3 13 L13 11.5 L14.5 13.5 L4.5 15.5 Z" fill="#b8e4c8"/><path d="M3 2.5 L12 1.5" stroke="#1c4c8c" stroke-width="1.6" stroke-dasharray="1 1"/></svg>
<div class="a" style="left:272px;top:777px;width:15px;height:15px;background:linear-gradient(#2c64b8,#123c84);box-shadow:1px 1px 0 #0c2c64;"></div>
<span class="t" style="left:273.0px;top:780px;font-size:9px;color:#fff;font-weight:bold;">Ps</span>
<svg style="left:325px;top:778px" width="16" height="16"><circle cx="8" cy="8" r="7.6" fill="#3ca828"/><circle cx="8" cy="8" r="7.6" fill="none" stroke="#207c18" stroke-width="0.8"/><path d="M4 12 L9 3 M6 13 L11 4 M8.5 13 L12.6 6" stroke="#fff" stroke-width="1.5"/><path d="M3 12 L6 14 L3.4 14.2 Z" fill="#fff"/></svg>
<svg style="left:378px;top:777px" width="16" height="17"><path d="M3.5 0.5 H11 L14.5 4 V16 H3.5 Z" fill="#fff" stroke="#9c9c9c" stroke-width="1"/><rect x="0.5" y="2.5" width="8" height="4" fill="#e01818"/><path d="M5 13.5 C7 11 8.5 8 8.4 5.6 C8.2 8.6 10 11.4 13 11.6 C10 11.4 7 12.2 5 13.5 Z" fill="none" stroke="#e01818" stroke-width="1.2"/></svg>
<svg style="left:431px;top:777px" width="17" height="17"><path d="M6.5 2.5 H13 L15.5 5 V15.5 H6.5 Z" fill="#fff" stroke="#7088b8" stroke-width="1"/><path d="M8 8 H14 M8 10 H14 M8 12 H14" stroke="#a8b8d8" stroke-width="1"/><rect x="0.5" y="0.5" width="10" height="9" fill="#2c58b0" stroke="#183878" stroke-width="1"/><path d="M2.4 2.6 L3.8 7.4 L5.5 3.6 L7.2 7.4 L8.6 2.6" fill="none" stroke="#fff" stroke-width="1.3"/></svg>
<svg style="left:484px;top:777px" width="17" height="17"><path d="M6.5 2.5 H13 L15.5 5 V15.5 H6.5 Z" fill="#fff" stroke="#7088b8" stroke-width="1"/><path d="M8 8 H14 M8 10 H14 M8 12 H14" stroke="#a8b8d8" stroke-width="1"/><rect x="0.5" y="0.5" width="10" height="9" fill="#2c58b0" stroke="#183878" stroke-width="1"/><path d="M2.4 2.6 L3.8 7.4 L5.5 3.6 L7.2 7.4 L8.6 2.6" fill="none" stroke="#fff" stroke-width="1.3"/></svg>
<svg style="left:537px;top:777px" width="17" height="17"><path d="M6.5 2.5 H13 L15.5 5 V15.5 H6.5 Z" fill="#fff" stroke="#7088b8" stroke-width="1"/><path d="M8 8 H14 M8 10 H14 M8 12 H14" stroke="#a8b8d8" stroke-width="1"/><rect x="0.5" y="0.5" width="10" height="9" fill="#2c58b0" stroke="#183878" stroke-width="1"/><path d="M2.4 2.6 L3.8 7.4 L5.5 3.6 L7.2 7.4 L8.6 2.6" fill="none" stroke="#fff" stroke-width="1.3"/></svg>
<svg style="left:590px;top:776.5px" width="16" height="16" viewBox="0 0 16 16"><defs><radialGradient id="fb590_776.5" cx="0.45" cy="0.3" r="0.7"><stop offset="0" stop-color="#5cb8f4"/><stop offset="1" stop-color="#123890"/></radialGradient><linearGradient id="fo590_776.5" x1="1" y1="0" x2="0.1" y2="1"><stop offset="0" stop-color="#fcd83c"/><stop offset="0.45" stop-color="#f49420"/><stop offset="1" stop-color="#d8501c"/></linearGradient></defs><circle cx="8.2" cy="8.2" r="7.3" fill="url(#fo590_776.5)"/><circle cx="9.4" cy="6.2" r="4.7" fill="url(#fb590_776.5)"/><path d="M1.2 3.6 L4.4 1.2 L4.8 3.8 L7.2 4.2 L5.8 6.2 L8.6 7.8 C7.8 9.2 6.2 9.4 5 8.8 C5.8 10.8 8.2 11.6 10.4 10.8 C8.8 13.2 4.6 13.2 2.6 10.8 C1 8.8 0.4 5.8 1.2 3.6 Z" fill="#f08820"/><path d="M1.2 3.6 L4.4 1.2 L4.8 3.8 C3 4.6 2 6.6 2.2 9 C1 7.4 0.6 5.4 1.2 3.6 Z" fill="#f8a838"/></svg>
<svg style="left:643px;top:776.5px" width="16" height="16" viewBox="0 0 16 16"><defs><radialGradient id="fb643_776.5" cx="0.45" cy="0.3" r="0.7"><stop offset="0" stop-color="#5cb8f4"/><stop offset="1" stop-color="#123890"/></radialGradient><linearGradient id="fo643_776.5" x1="1" y1="0" x2="0.1" y2="1"><stop offset="0" stop-color="#fcd83c"/><stop offset="0.45" stop-color="#f49420"/><stop offset="1" stop-color="#d8501c"/></linearGradient></defs><circle cx="8.2" cy="8.2" r="7.3" fill="url(#fo643_776.5)"/><circle cx="9.4" cy="6.2" r="4.7" fill="url(#fb643_776.5)"/><path d="M1.2 3.6 L4.4 1.2 L4.8 3.8 L7.2 4.2 L5.8 6.2 L8.6 7.8 C7.8 9.2 6.2 9.4 5 8.8 C5.8 10.8 8.2 11.6 10.4 10.8 C8.8 13.2 4.6 13.2 2.6 10.8 C1 8.8 0.4 5.8 1.2 3.6 Z" fill="#f08820"/><path d="M1.2 3.6 L4.4 1.2 L4.8 3.8 C3 4.6 2 6.6 2.2 9 C1 7.4 0.6 5.4 1.2 3.6 Z" fill="#f8a838"/></svg>
<svg style="left:696px;top:776.5px" width="16" height="16" viewBox="0 0 16 16"><defs><radialGradient id="fb696_776.5" cx="0.45" cy="0.3" r="0.7"><stop offset="0" stop-color="#5cb8f4"/><stop offset="1" stop-color="#123890"/></radialGradient><linearGradient id="fo696_776.5" x1="1" y1="0" x2="0.1" y2="1"><stop offset="0" stop-color="#fcd83c"/><stop offset="0.45" stop-color="#f49420"/><stop offset="1" stop-color="#d8501c"/></linearGradient></defs><circle cx="8.2" cy="8.2" r="7.3" fill="url(#fo696_776.5)"/><circle cx="9.4" cy="6.2" r="4.7" fill="url(#fb696_776.5)"/><path d="M1.2 3.6 L4.4 1.2 L4.8 3.8 L7.2 4.2 L5.8 6.2 L8.6 7.8 C7.8 9.2 6.2 9.4 5 8.8 C5.8 10.8 8.2 11.6 10.4 10.8 C8.8 13.2 4.6 13.2 2.6 10.8 C1 8.8 0.4 5.8 1.2 3.6 Z" fill="#f08820"/><path d="M1.2 3.6 L4.4 1.2 L4.8 3.8 C3 4.6 2 6.6 2.2 9 C1 7.4 0.6 5.4 1.2 3.6 Z" fill="#f8a838"/></svg>
<svg style="left:749px;top:776.5px" width="16" height="16" viewBox="0 0 16 16"><defs><radialGradient id="fb749_776.5" cx="0.45" cy="0.3" r="0.7"><stop offset="0" stop-color="#5cb8f4"/><stop offset="1" stop-color="#123890"/></radialGradient><linearGradient id="fo749_776.5" x1="1" y1="0" x2="0.1" y2="1"><stop offset="0" stop-color="#fcd83c"/><stop offset="0.45" stop-color="#f49420"/><stop offset="1" stop-color="#d8501c"/></linearGradient></defs><circle cx="8.2" cy="8.2" r="7.3" fill="url(#fo749_776.5)"/><circle cx="9.4" cy="6.2" r="4.7" fill="url(#fb749_776.5)"/><path d="M1.2 3.6 L4.4 1.2 L4.8 3.8 L7.2 4.2 L5.8 6.2 L8.6 7.8 C7.8 9.2 6.2 9.4 5 8.8 C5.8 10.8 8.2 11.6 10.4 10.8 C8.8 13.2 4.6 13.2 2.6 10.8 C1 8.8 0.4 5.8 1.2 3.6 Z" fill="#f08820"/><path d="M1.2 3.6 L4.4 1.2 L4.8 3.8 C3 4.6 2 6.6 2.2 9 C1 7.4 0.6 5.4 1.2 3.6 Z" fill="#f8a838"/></svg>
<svg style="left:803px;top:776.5px" width="16" height="16" viewBox="0 0 16 16"><defs><radialGradient id="fb803_776.5" cx="0.45" cy="0.3" r="0.7"><stop offset="0" stop-color="#5cb8f4"/><stop offset="1" stop-color="#123890"/></radialGradient><linearGradient id="fo803_776.5" x1="1" y1="0" x2="0.1" y2="1"><stop offset="0" stop-color="#fcd83c"/><stop offset="0.45" stop-color="#f49420"/><stop offset="1" stop-color="#d8501c"/></linearGradient></defs><circle cx="8.2" cy="8.2" r="7.3" fill="url(#fo803_776.5)"/><circle cx="9.4" cy="6.2" r="4.7" fill="url(#fb803_776.5)"/><path d="M1.2 3.6 L4.4 1.2 L4.8 3.8 L7.2 4.2 L5.8 6.2 L8.6 7.8 C7.8 9.2 6.2 9.4 5 8.8 C5.8 10.8 8.2 11.6 10.4 10.8 C8.8 13.2 4.6 13.2 2.6 10.8 C1 8.8 0.4 5.8 1.2 3.6 Z" fill="#f08820"/><path d="M1.2 3.6 L4.4 1.2 L4.8 3.8 C3 4.6 2 6.6 2.2 9 C1 7.4 0.6 5.4 1.2 3.6 Z" fill="#f8a838"/></svg>
<svg style="left:857px;top:776.5px" width="16" height="16" viewBox="0 0 16 16"><defs><radialGradient id="fb857_776.5" cx="0.45" cy="0.3" r="0.7"><stop offset="0" stop-color="#5cb8f4"/><stop offset="1" stop-color="#123890"/></radialGradient><linearGradient id="fo857_776.5" x1="1" y1="0" x2="0.1" y2="1"><stop offset="0" stop-color="#fcd83c"/><stop offset="0.45" stop-color="#f49420"/><stop offset="1" stop-color="#d8501c"/></linearGradient></defs><circle cx="8.2" cy="8.2" r="7.3" fill="url(#fo857_776.5)"/><circle cx="9.4" cy="6.2" r="4.7" fill="url(#fb857_776.5)"/><path d="M1.2 3.6 L4.4 1.2 L4.8 3.8 L7.2 4.2 L5.8 6.2 L8.6 7.8 C7.8 9.2 6.2 9.4 5 8.8 C5.8 10.8 8.2 11.6 10.4 10.8 C8.8 13.2 4.6 13.2 2.6 10.8 C1 8.8 0.4 5.8 1.2 3.6 Z" fill="#f08820"/><path d="M1.2 3.6 L4.4 1.2 L4.8 3.8 C3 4.6 2 6.6 2.2 9 C1 7.4 0.6 5.4 1.2 3.6 Z" fill="#f8a838"/></svg>
<svg style="left:911px;top:776.5px" width="16" height="16" viewBox="0 0 16 16"><defs><radialGradient id="fb911_776.5" cx="0.45" cy="0.3" r="0.7"><stop offset="0" stop-color="#5cb8f4"/><stop offset="1" stop-color="#123890"/></radialGradient><linearGradient id="fo911_776.5" x1="1" y1="0" x2="0.1" y2="1"><stop offset="0" stop-color="#fcd83c"/><stop offset="0.45" stop-color="#f49420"/><stop offset="1" stop-color="#d8501c"/></linearGradient></defs><circle cx="8.2" cy="8.2" r="7.3" fill="url(#fo911_776.5)"/><circle cx="9.4" cy="6.2" r="4.7" fill="url(#fb911_776.5)"/><path d="M1.2 3.6 L4.4 1.2 L4.8 3.8 L7.2 4.2 L5.8 6.2 L8.6 7.8 C7.8 9.2 6.2 9.4 5 8.8 C5.8 10.8 8.2 11.6 10.4 10.8 C8.8 13.2 4.6 13.2 2.6 10.8 C1 8.8 0.4 5.8 1.2 3.6 Z" fill="#f08820"/><path d="M1.2 3.6 L4.4 1.2 L4.8 3.8 C3 4.6 2 6.6 2.2 9 C1 7.4 0.6 5.4 1.2 3.6 Z" fill="#f8a838"/></svg>
<svg style="left:965px;top:776.5px" width="16" height="16" viewBox="0 0 16 16"><defs><radialGradient id="fb965_776.5" cx="0.45" cy="0.3" r="0.7"><stop offset="0" stop-color="#5cb8f4"/><stop offset="1" stop-color="#123890"/></radialGradient><linearGradient id="fo965_776.5" x1="1" y1="0" x2="0.1" y2="1"><stop offset="0" stop-color="#fcd83c"/><stop offset="0.45" stop-color="#f49420"/><stop offset="1" stop-color="#d8501c"/></linearGradient></defs><circle cx="8.2" cy="8.2" r="7.3" fill="url(#fo965_776.5)"/><circle cx="9.4" cy="6.2" r="4.7" fill="url(#fb965_776.5)"/><path d="M1.2 3.6 L4.4 1.2 L4.8 3.8 L7.2 4.2 L5.8 6.2 L8.6 7.8 C7.8 9.2 6.2 9.4 5 8.8 C5.8 10.8 8.2 11.6 10.4 10.8 C8.8 13.2 4.6 13.2 2.6 10.8 C1 8.8 0.4 5.8 1.2 3.6 Z" fill="#f08820"/><path d="M1.2 3.6 L4.4 1.2 L4.8 3.8 C3 4.6 2 6.6 2.2 9 C1 7.4 0.6 5.4 1.2 3.6 Z" fill="#f8a838"/></svg>
<svg style="left:1019px;top:777px" width="16" height="17"><path d="M3.5 0.5 H11 L14.5 4 V16 H3.5 Z" fill="#fff" stroke="#9c9c9c" stroke-width="1"/><rect x="0.5" y="2.5" width="8" height="4" fill="#e01818"/><path d="M5 13.5 C7 11 8.5 8 8.4 5.6 C8.2 8.6 10 11.4 13 11.6 C10 11.4 7 12.2 5 13.5 Z" fill="none" stroke="#e01818" stroke-width="1.2"/></svg>
<svg style="left:1073px;top:776.5px" width="16" height="16" viewBox="0 0 16 16"><defs><radialGradient id="fb1073_776.5" cx="0.45" cy="0.3" r="0.7"><stop offset="0" stop-color="#5cb8f4"/><stop offset="1" stop-color="#123890"/></radialGradient><linearGradient id="fo1073_776.5" x1="1" y1="0" x2="0.1" y2="1"><stop offset="0" stop-color="#fcd83c"/><stop offset="0.45" stop-color="#f49420"/><stop offset="1" stop-color="#d8501c"/></linearGradient></defs><circle cx="8.2" cy="8.2" r="7.3" fill="url(#fo1073_776.5)"/><circle cx="9.4" cy="6.2" r="4.7" fill="url(#fb1073_776.5)"/><path d="M1.2 3.6 L4.4 1.2 L4.8 3.8 L7.2 4.2 L5.8 6.2 L8.6 7.8 C7.8 9.2 6.2 9.4 5 8.8 C5.8 10.8 8.2 11.6 10.4 10.8 C8.8 13.2 4.6 13.2 2.6 10.8 C1 8.8 0.4 5.8 1.2 3.6 Z" fill="#f08820"/><path d="M1.2 3.6 L4.4 1.2 L4.8 3.8 C3 4.6 2 6.6 2.2 9 C1 7.4 0.6 5.4 1.2 3.6 Z" fill="#f8a838"/></svg>
<svg style="left:1128px;top:777.5px" width="16" height="16" viewBox="0 0 16 16"><defs><radialGradient id="fb1128_777.5" cx="0.45" cy="0.3" r="0.7"><stop offset="0" stop-color="#5cb8f4"/><stop offset="1" stop-color="#123890"/></radialGradient><linearGradient id="fo1128_777.5" x1="1" y1="0" x2="0.1" y2="1"><stop offset="0" stop-color="#fcd83c"/><stop offset="0.45" stop-color="#f49420"/><stop offset="1" stop-color="#d8501c"/></linearGradient></defs><circle cx="8.2" cy="8.2" r="7.3" fill="url(#fo1128_777.5)"/><circle cx="9.4" cy="6.2" r="4.7" fill="url(#fb1128_777.5)"/><path d="M1.2 3.6 L4.4 1.2 L4.8 3.8 L7.2 4.2 L5.8 6.2 L8.6 7.8 C7.8 9.2 6.2 9.4 5 8.8 C5.8 10.8 8.2 11.6 10.4 10.8 C8.8 13.2 4.6 13.2 2.6 10.8 C1 8.8 0.4 5.8 1.2 3.6 Z" fill="#f08820"/><path d="M1.2 3.6 L4.4 1.2 L4.8 3.8 C3 4.6 2 6.6 2.2 9 C1 7.4 0.6 5.4 1.2 3.6 Z" fill="#f8a838"/></svg>
<svg style="left:1218px;top:777px" width="18" height="18"><path d="M1.5 1.5 L8.5 1 L15.5 1.5 V8 C15.5 12 12.5 15 8.5 16.2 C4.5 15 1.5 12 1.5 8 Z" fill="#6474e4" stroke="#3c4cac" stroke-width="0.8"/><path d="M8.5 1 L15.5 1.5 V8 C15.5 12 12.5 15 8.5 16.2 Z" fill="#8c9cf4"/><path d="M2 4 H8.5 M2 7 H8.5 M2.6 10 H8.5 M4.4 13 H8.5" stroke="#dce4ff" stroke-width="1.3"/><path d="M8.5 1 V16" stroke="#3c4cac" stroke-width="0.7"/></svg>
</div></body></html>
